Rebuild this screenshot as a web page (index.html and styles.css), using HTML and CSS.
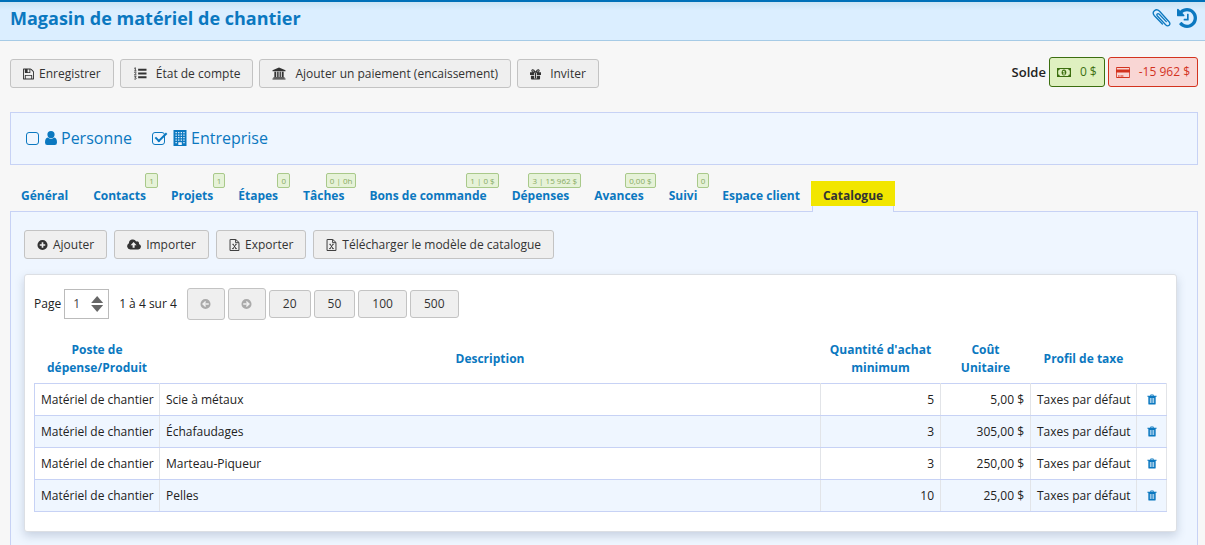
FILE: index.html
```html
<!DOCTYPE html>
<html lang="fr">
<head>
<meta charset="utf-8">
<meta name="viewport" content="width=device-width, initial-scale=1">
<title>Magasin de matériel de chantier</title>
<link rel="stylesheet" href="styles.css">
</head>
<body>
<svg class="sprite" aria-hidden="true">
  <symbol id="save" viewBox="0 128 1536 1536"><path d="M384 1536h768v-384h-768v384zm896 0h128v-896q0-14-10-38.500t-20-34.500l-281-281q-10-10-34-20t-39-10v416q0 40-28 68t-68 28h-576q-40 0-68-28t-28-68v-416h-128v1280h128v-416q0-40 28-68t68-28h832q40 0 68 28t28 68v416zm-384-928v-320q0-13-9.500-22.500t-22.500-9.500h-192q-13 0-22.500 9.500t-9.500 22.500v320q0 13 9.500 22.500t22.500 9.500h192q13 0 22.500-9.500t9.500-22.500zm640 32v928q0 40-28 68t-68 28h-1344q-40 0-68-28t-28-68v-1344q0-40 28-68t68-28h928q40 0 88 20t76 48l280 280q28 28 48 76t20 88z"/></symbol>
  <symbol id="list" viewBox="0 0 14 14"><path d="M5 2h9v2H5zM5 6h9v2H5zM5 10h9v2H5z"/><path d="M.8 1.500 2 .8V4M.8 4.200h2.400M.8 6q1.200-1 2 0 .3.800-1.800 2.400h2.200M.8 10h2L1.600 11.400q1.600 0 1.300 1.200-.8 1-2.100.300" fill="none" stroke="currentColor" stroke-width=".9"/></symbol>
  <symbol id="bank" viewBox="0 0 14 14"><path d="M7 .5 14 3.500V4.500H0V3.500zM2 5.200h2v5.600H2zM5 5.200h1.600v5.600H5zM7.600 5.200H9v5.600H7.600zM10 5.200h2v5.600h-2zM1 11h12v1H1zM0 12.300h14v1.200H0z"/></symbol>
  <symbol id="gift" viewBox="0 0 12 12"><path fill-rule="evenodd" d="M0 4h2.600A2 2 0 0 1 1.400 2.300C1.400.9 3.300.2 4.500 1.400L6 3.200l1.500-1.800C8.700.2 10.600.9 10.600 2.300A2 2 0 0 1 9.400 4H12v3.200H7.400V4.600H4.600v2.600H0zM2.600 2.400q0 1 1.800 1L3.800 2.500q-1-.9-1.200-.1zM9.400 2.400q-.2-.8-1.200.1l-.6.900q1.800 0 1.800-1zM1 7.800h3.600V11h2.800V7.800H11V11q0 1-1 1H2q-1 0-1-1zM5.400 5h1.200v5.600H5.400z"/></symbol>
  <symbol id="clip" viewBox="0 0 20 20"><path d="M14.300 13.600 7.300 6.200C5.700 4.700 4 6.400 5.400 8l8.200 8.700c2.600 2.600 5.700-.3 3.400-2.900L7.600 3.200C3.900-.4-.9 3.900 2.400 7.700l8 8.300" fill="none" stroke="currentColor" stroke-width="1.300" stroke-linecap="round"/></symbol>
  <symbol id="history" viewBox="128 128 1536 1536"><path d="M1664 896q0 156-61 298t-164 245-245 164-298 61q-172 0-327-72.500t-264-204.500q-7-10-6.500-22.500t8.500-20.500l137-138q10-9 25-9 16 2 23 12 73 95 179 147t225 52q104 0 198.500-40.500t163.500-109.500 109.500-163.500 40.500-198.500-40.500-198.500-109.500-163.500-163.500-109.500-198.500-40.500q-98 0-188 35.500t-160 101.500l137 138q31 30 14 69-17 40-59 40h-448q-26 0-45-19t-19-45v-448q0-42 40-59 39-17 69 14l130 129q107-101 244.500-156.500t284.500-55.500q156 0 298 61t245 164 164 245 61 298zm-640-288v448q0 14-9 23t-23 9h-320q-14 0-23-9t-9-23v-64q0-14 9-23t23-9h224v-352q0-14 9-23t23-9h64q14 0 23 9t9 23z"/></symbol>
  <symbol id="money" viewBox="0 0 14 10"><path fill-rule="evenodd" d="M0 .5h14v9H0zM1.200 3v4q1.400 0 1.600 1.400h8.400Q11.400 7 12.800 7V3q-1.400 0-1.600-1.400H2.800Q2.600 3 1.200 3zM7 2c3.200 0 3.200 6 0 6S3.800 2 7 2zM5.800 3.800v.8h.7v1.700h-.7V7h2.400v-.7h-.6V3.200h-.7z"/></symbol>
  <symbol id="card" viewBox="0 0 14 12"><path fill-rule="evenodd" d="M1 .5h12q1 0 1 1v9q0 1-1 1H1q-1 0-1-1v-9q0-1 1-1zM.8 1.500v1.400h12.400V1.500zM.8 6v4.600h12.400V6zM2 9h1.600v.9H2zM4.400 9h3v.9h-3z"/></symbol>
  <symbol id="user" viewBox="0 0 12 14"><path d="M6 0a3.500 3.500 0 1 1 0 7.200A3.500 3.500 0 0 1 6 0zM2.800 6.500Q6 9.300 9.200 6.500 12 7 12 11.500 12 14 9.800 14H2.200Q0 14 0 11.500 0 7 2.800 6.500z"/></symbol>
  <symbol id="building" viewBox="0 0 13 16"><path fill-rule="evenodd" d="M0 0h13v16H0zM2 2v1.200h1.300V2zM4.600 2v1.200h1.300V2zM7.200 2v1.200h1.300V2zM9.800 2v1.200h1.300V2zM2 4.500v1.200h1.300V4.500zM4.600 4.500v1.200h1.300V4.500zM7.200 4.500v1.200h1.300V4.500zM9.800 4.500v1.200h1.300V4.500zM2 7v1.200h1.300V7zM4.600 7v1.200h1.300V7zM7.200 7v1.200h1.300V7zM9.800 7v1.200h1.300V7zM2 9.500v1.200h1.300V9.500zM4.600 9.500v1.200h1.300V9.500zM7.200 9.500v1.200h1.300V9.500zM9.800 9.500v1.200h1.300V9.500zM2 12v1.200h1.300V12zM9.800 12v1.200h1.300V12zM4.800 12.200V15h3.500v-2.800z"/></symbol>
  <symbol id="plus" viewBox="0 0 12 12"><path fill-rule="evenodd" d="M6 .5a5.500 5.500 0 1 1 0 11 5.500 5.500 0 0 1 0-11zM5.100 3v2.100H3v1.800h2.100V9h1.800V6.900H9V5.100H6.900V3z"/></symbol>
  <symbol id="cloud" viewBox="0 0 14 12"><path fill-rule="evenodd" d="M3.300 11A3.300 3.300 0 0 1 1.900 4.800 3.900 3.900 0 0 1 9.200 3a2 2 0 0 1 2.700 2.500A2.800 2.800 0 0 1 11.200 11zM6.600 3.600 3.600 6.700h2V9.300h2V6.700h2z"/></symbol>
  <symbol id="excel" viewBox="0 0 12 14"><path d="M1 .6h6.500L11.200 4v9.400H.8V.6zM7.300.8v3.500h3.700M3.600 6.200h1.600M6.900 6.200h1.600M3.300 11.200h1.800M6.800 11.200h1.800M4.400 6.200l3.400 5M7.700 6.200l-3.400 5" fill="none" stroke="currentColor" stroke-width="1.100"/></symbol>
  <symbol id="left" viewBox="0 0 12 12"><path fill-rule="evenodd" d="M6 .5a5.500 5.500 0 1 1 0 11 5.500 5.500 0 0 1 0-11zM5.600 2.600 2.200 6l3.400 3.400 1.100-1.100L5.300 6.800h4.300V5.200H5.300l1.400-1.500z"/></symbol>
  <symbol id="right" viewBox="0 0 12 12"><path fill-rule="evenodd" d="M6 .5a5.500 5.500 0 1 1 0 11 5.500 5.500 0 0 1 0-11zM6.400 2.600 9.800 6 6.400 9.400 5.300 8.300l1.400-1.500H2.400V5.200h4.300L5.300 3.700z"/></symbol>
  <symbol id="trash" viewBox="0 0 10 12"><path fill-rule="evenodd" d="M3 1.800 3.500.6h3L7 1.800h3v1.100H9V10.500Q9 11.500 8 11.500H2q-1 0-1-1V2.900H0V1.800zM4 1.800h2l-.2-.5H4.200zM2.700 4.300v5.400h.8V4.300zM4.600 4.300v5.400h.8V4.300zM6.500 4.300v5.400h.8V4.300z"/></symbol>
</svg>

<header class="topbar">
  <h1 class="title">Magasin de matériel de chantier</h1>
  <div class="top-actions">
    <button class="icon-btn" aria-label="Pièces jointes"><svg class="icon-lg"><use href="#clip"/></svg></button>
    <button class="icon-btn" aria-label="Historique"><svg class="icon-lg"><use href="#history"/></svg></button>
  </div>
</header>

<main class="page">
  <div class="toolbar">
    <div class="buttons">
      <button class="btn"><svg class="icon sm"><use href="#save"/></svg>Enregistrer</button>
      <button class="btn wide"><svg class="icon md"><use href="#list"/></svg>État de compte</button>
      <button class="btn wide"><svg class="icon md"><use href="#bank"/></svg>Ajouter un paiement (encaissement)</button>
      <button class="btn wide"><svg class="icon sm"><use href="#gift"/></svg>Inviter</button>
    </div>
    <div class="balance">
      <span class="balance-label">Solde</span>
      <span class="pill credit"><svg class="icon md"><use href="#money"/></svg>0 $</span>
      <span class="pill debit"><svg class="icon md"><use href="#card"/></svg>-15 962 $</span>
    </div>
  </div>

  <section class="kind">
    <label class="kind-option"><input class="check" type="checkbox"><svg class="icon user"><use href="#user"/></svg>Personne</label>
    <label class="kind-option"><input class="check" type="checkbox" checked><svg class="icon building"><use href="#building"/></svg>Entreprise</label>
  </section>

  <nav class="tabs">
    <a class="tab" href="#">Général</a>
    <a class="tab" href="#">Contacts<span class="count">1</span></a>
    <a class="tab" href="#">Projets<span class="count">1</span></a>
    <a class="tab" href="#">Étapes<span class="count">0</span></a>
    <a class="tab" href="#">Tâches<span class="count">0 | 0h</span></a>
    <a class="tab" href="#">Bons de commande<span class="count">1 | 0 $</span></a>
    <a class="tab" href="#">Dépenses<span class="count">3 | 15 962 $</span></a>
    <a class="tab" href="#">Avances<span class="count">0,00 $</span></a>
    <a class="tab" href="#">Suivi<span class="count">0</span></a>
    <a class="tab" href="#">Espace client</a>
    <a class="tab active" href="#" aria-current="page"><span class="mark">Catalogue</span></a>
  </nav>

  <section class="panel">
    <div class="buttons">
      <button class="btn"><svg class="icon sm"><use href="#plus"/></svg>Ajouter</button>
      <button class="btn"><svg class="icon md"><use href="#cloud"/></svg>Importer</button>
      <button class="btn"><svg class="icon sm"><use href="#excel"/></svg>Exporter</button>
      <button class="btn"><svg class="icon sm"><use href="#excel"/></svg>Télécharger le modèle de catalogue</button>
    </div>

    <div class="card">
      <div class="pager">
        <label for="page-number">Page</label>
        <span class="stepper">
          <input class="page-input" id="page-number" type="text" inputmode="numeric" value="1">
          <span class="arrows"><button class="arrow up" aria-label="Page suivante"></button><button class="arrow down" aria-label="Page précédente"></button></span>
        </span>
        <span class="range">1 à 4 sur 4</span>
        <span class="sizes">
          <button class="btn step" disabled aria-label="Précédent"><svg class="icon sm"><use href="#left"/></svg></button>
          <button class="btn step" disabled aria-label="Suivant"><svg class="icon sm"><use href="#right"/></svg></button>
          <button class="btn size">20</button>
          <button class="btn size">50</button>
          <button class="btn size">100</button>
          <button class="btn size">500</button>
        </span>
      </div>

      <table class="grid">
        <colgroup><col class="c-post"><col><col class="c-qty"><col class="c-cost"><col class="c-tax"><col class="c-del"></colgroup>
        <thead>
          <tr><th>Poste de dépense/Produit</th><th>Description</th><th>Quantité d'achat minimum</th><th>Coût Unitaire</th><th>Profil de taxe</th><td></td></tr>
        </thead>
        <tbody>
          <tr><td>Matériel de chantier</td><td>Scie à métaux</td><td class="num">5</td><td class="num">5,00 $</td><td>Taxes par défaut</td><td class="del"><button class="icon-btn" aria-label="Supprimer"><svg class="icon trash"><use href="#trash"/></svg></button></td></tr>
          <tr><td>Matériel de chantier</td><td>Échafaudages</td><td class="num">3</td><td class="num">305,00 $</td><td>Taxes par défaut</td><td class="del"><button class="icon-btn" aria-label="Supprimer"><svg class="icon trash"><use href="#trash"/></svg></button></td></tr>
          <tr><td>Matériel de chantier</td><td>Marteau-Piqueur</td><td class="num">3</td><td class="num">250,00 $</td><td>Taxes par défaut</td><td class="del"><button class="icon-btn" aria-label="Supprimer"><svg class="icon trash"><use href="#trash"/></svg></button></td></tr>
          <tr><td>Matériel de chantier</td><td>Pelles</td><td class="num">10</td><td class="num">25,00 $</td><td>Taxes par défaut</td><td class="del"><button class="icon-btn" aria-label="Supprimer"><svg class="icon trash"><use href="#trash"/></svg></button></td></tr>
        </tbody>
      </table>
    </div>
  </section>
</main>
</body>
</html>
```
FILE: styles.css
```css
* { box-sizing: border-box; }

body {
  margin: 0;
  min-height: 100vh;
  display: flex;
  flex-direction: column;
  background: #f7f7f7;
  color: #222;
  font-family: "Open Sans", "Noto Sans", sans-serif;
  font-size: 12px;
  line-height: 18px;
}

button, input { font: inherit; color: inherit; }
.sprite { position: absolute; width: 0; height: 0; }

svg { fill: currentColor; flex: none; display: block; }
.icon.sm { width: 11px; height: 12px; }
.icon.md { width: 14px; height: 13px; }
.icon-lg { width: 20px; height: 20px; }

.icon-btn {
  padding: 0;
  border: 0;
  background: none;
  color: #0b78c0;
  cursor: pointer;
}

.topbar {
  display: flex;
  align-items: center;
  justify-content: space-between;
  padding: 2px 8px 8px 10px;
  border-top: 2px solid #0070b8;
  border-bottom: 1px solid #a6cbe6;
  background: linear-gradient(#cbe3f3, #dbeeff 8px);
}
.title { margin: 0; color: #0b78c0; font-size: 18px; line-height: 28px; font-weight: 700; }
.top-actions { display: flex; gap: 5px; }

.page { flex: 1; display: flex; flex-direction: column; padding: 16px 7px 0 10px; }

.toolbar { display: flex; justify-content: space-between; align-items: flex-start; }
.buttons { display: flex; flex-wrap: wrap; gap: 6px; }
.toolbar .buttons { padding-top: 2px; }
.panel .buttons { gap: 7px; }
.btn {
  display: flex;
  align-items: center;
  justify-content: center;
  gap: 5px;
  height: 29px;
  padding: 0 12px;
  border: 1px solid #c3c3c3;
  border-radius: 3px;
  background: #efefef;
  color: #333;
  white-space: nowrap;
}
.btn.wide { gap: 9px; }

.balance { display: flex; align-items: center; gap: 3px; }
.balance-label { font-size: 13px; font-weight: 600; }
.pill {
  display: flex;
  align-items: center;
  gap: 9px;
  height: 30px;
  padding: 0 7px;
  border: 1px solid;
  border-radius: 3px;
}
.credit { background: #dff0c0; border-color: #3c6e10; color: #3c6e10; }
.debit { background: #f9d6d4; border-color: #d3331f; color: #d3331f; }

.kind {
  display: flex;
  gap: 20px;
  margin-top: 24px;
  padding: 12px 15px 13px;
  border: 1px solid #c7d2f5;
  background: #eff6ff;
  color: #0b78c0;
  font-size: 16px;
  line-height: 26px;
}
.kind-option { display: flex; align-items: center; gap: 4px; }
.icon.user { width: 12px; height: 14px; }
.icon.building { width: 14px; height: 16px; }
.check {
  appearance: none;
  position: relative;
  width: 13px;
  height: 13px;
  margin: 0 2px 0 0;
  border: 1px solid #0b78c0;
  border-radius: 3px;
}
.check:checked { margin-right: 4px; }
.check:checked::after {
  content: "";
  box-sizing: border-box;
  position: absolute;
  left: 5px;
  top: -3px;
  width: 6px;
  height: 12px;
  border: solid #0b78c0;
  border-width: 0 2px 2px 0;
  transform: rotate(45deg);
}

.tabs { display: flex; gap: 3px; padding-top: 16px; position: relative; z-index: 1; }
.tab {
  position: relative;
  padding: 5px 11px;
  line-height: 20px;
  color: #0b78c0;
  font-weight: 700;
  text-decoration: none;
  white-space: nowrap;
}
.count {
  position: absolute;
  right: -1px;
  top: -8px;
  padding: 0 3px;
  border: 1px solid #a9c98a;
  border-radius: 2px;
  background: #e6f2d8;
  color: #86aa62;
  font-size: 8px;
  line-height: 13px;
  font-weight: 400;
}
.tab.active {
  margin: 0 0 -1px -2px;
  padding: 0;
  border: solid #c7d2f5;
  border-width: 0 1px;
  background: #eff6ff;
  color: #333;
}
.mark { display: block; margin: 0 -2px; padding: 5px 12px 0; background: #f2e600; }

.panel {
  flex: 1;
  padding: 18px 20px 13px 13px;
  border: 1px solid #c7d2f5;
  border-bottom: 0;
  background: #eff6ff;
}
.card {
  margin-top: 15px;
  padding: 13px 9px 19px;
  border: 1px solid #dcdfe4;
  border-radius: 3px;
  background: #fff;
  box-shadow: 0 4px 10px rgba(60, 80, 120, .22);
}

.pager { display: flex; align-items: center; }
.stepper {
  display: flex;
  align-items: center;
  width: 45px;
  height: 30px;
  margin: 0 10px 0 3px;
  border: 1px solid #bbb;
}
.page-input { width: 26px; padding: 0 0 0 8px; border: 0; background: none; color: #444; }
.arrows { display: grid; gap: 2px; }
.arrow { width: 12px; height: 7px; padding: 0; border: 0; background: #666; }
.up { clip-path: polygon(50% 0, 100% 100%, 0 100%); }
.down { clip-path: polygon(0 0, 100% 0, 50% 100%); }
.sizes { display: flex; align-items: center; gap: 3px; margin-left: 10px; }
.btn.step { width: 38px; height: 32px; color: #aaa; }
.btn.size { height: 28px; padding: 0 13px; }

.grid { width: 100%; margin-top: 15px; border-collapse: collapse; table-layout: fixed; }
.c-post { width: 125px; }
.c-qty { width: 120px; }
.c-cost { width: 90px; }
.c-tax { width: 106px; }
.c-del { width: 30px; }
.grid th { padding: 6px 8px; color: #0b78c0; font-weight: 700; }
.grid tbody td {
  height: 32px;
  padding: 0 6px;
  border: 1px solid #c7d2f5;
  border-right-color: #e2e4e8;
  border-left-color: #e2e4e8;
  white-space: nowrap;
}
.grid tbody td:first-child { border-left-color: #c7d2f5; }
.grid tbody tr:nth-child(even) { background: #eff6ff; }
.grid .num { text-align: right; }
.icon.trash { width: 10px; height: 11px; }
.grid .del .icon-btn { display: block; margin: 0 auto; }
```
